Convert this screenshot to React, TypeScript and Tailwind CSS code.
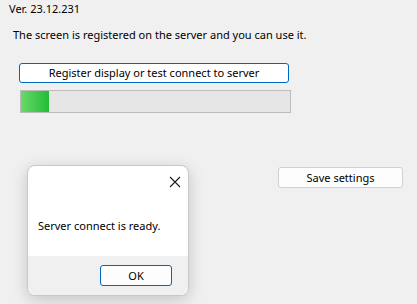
import React from "react";

export default function App() {
  const font = { fontFamily: '"Noto Sans", "Segoe UI", sans-serif' };
  return (
    <div
      className="relative w-[417px] h-[304px] overflow-hidden bg-[#f0f0f0] text-[11px] text-black"
      style={font}
    >
      <div className="flex flex-col">
        <div className="ml-[9px] mt-[1px] leading-[16px]">Ver. 23.12.231</div>
        <div className="ml-[13px] mt-[10px] leading-[16px]">
          The screen is registered on the server and you can use it.
        </div>
        <button className="ml-[19px] mt-[20px] w-[270px] h-[20px] rounded-[3px] border border-[#0067c0] bg-white text-[11px] leading-[16px] text-black">
          Register display or test connect to server
        </button>
        <div className="ml-[20px] mt-[7px] w-[271px] h-[23px] border border-[#bcbcbc] bg-[#e6e6e6]">
          <div className="h-full w-[28px] bg-[linear-gradient(to_right,#6ad96a,#22bb36)]" />
        </div>
        <button className="ml-[278px] mt-[54px] w-[125px] h-[21px] rounded-[3px] border border-[#d0d0d0] bg-[#fdfdfd] text-[11px] leading-[16px] text-black">
          Save settings
        </button>
      </div>

      <div className="absolute left-[27px] top-[165px] w-[162px] h-[131px] rounded-[8px] border border-[#c8c8c8] bg-white shadow-[0_4px_16px_rgba(0,0,0,0.18)] overflow-hidden flex flex-col">
        <div className="relative h-[90px]">
          <svg
            className="absolute left-[141px] top-[10px]"
            width="12"
            height="12"
            viewBox="0 0 12 12"
          >
            <path d="M1 1 L11 11 M11 1 L1 11" stroke="#1a1a1a" strokeWidth="1.1" />
          </svg>
          <div className="absolute left-[10px] top-[52px] leading-[16px]">
            Server connect is ready.
          </div>
        </div>
        <div className="flex-1 bg-[#f0f0f0] pt-[9px] pl-[72px]">
          <button className="w-[72px] h-[21px] rounded-[3px] border border-[#0067c0] bg-[#fdfdfd] text-[11px] leading-[16px] text-black">
            OK
          </button>
        </div>
      </div>
    </div>
  );
}
